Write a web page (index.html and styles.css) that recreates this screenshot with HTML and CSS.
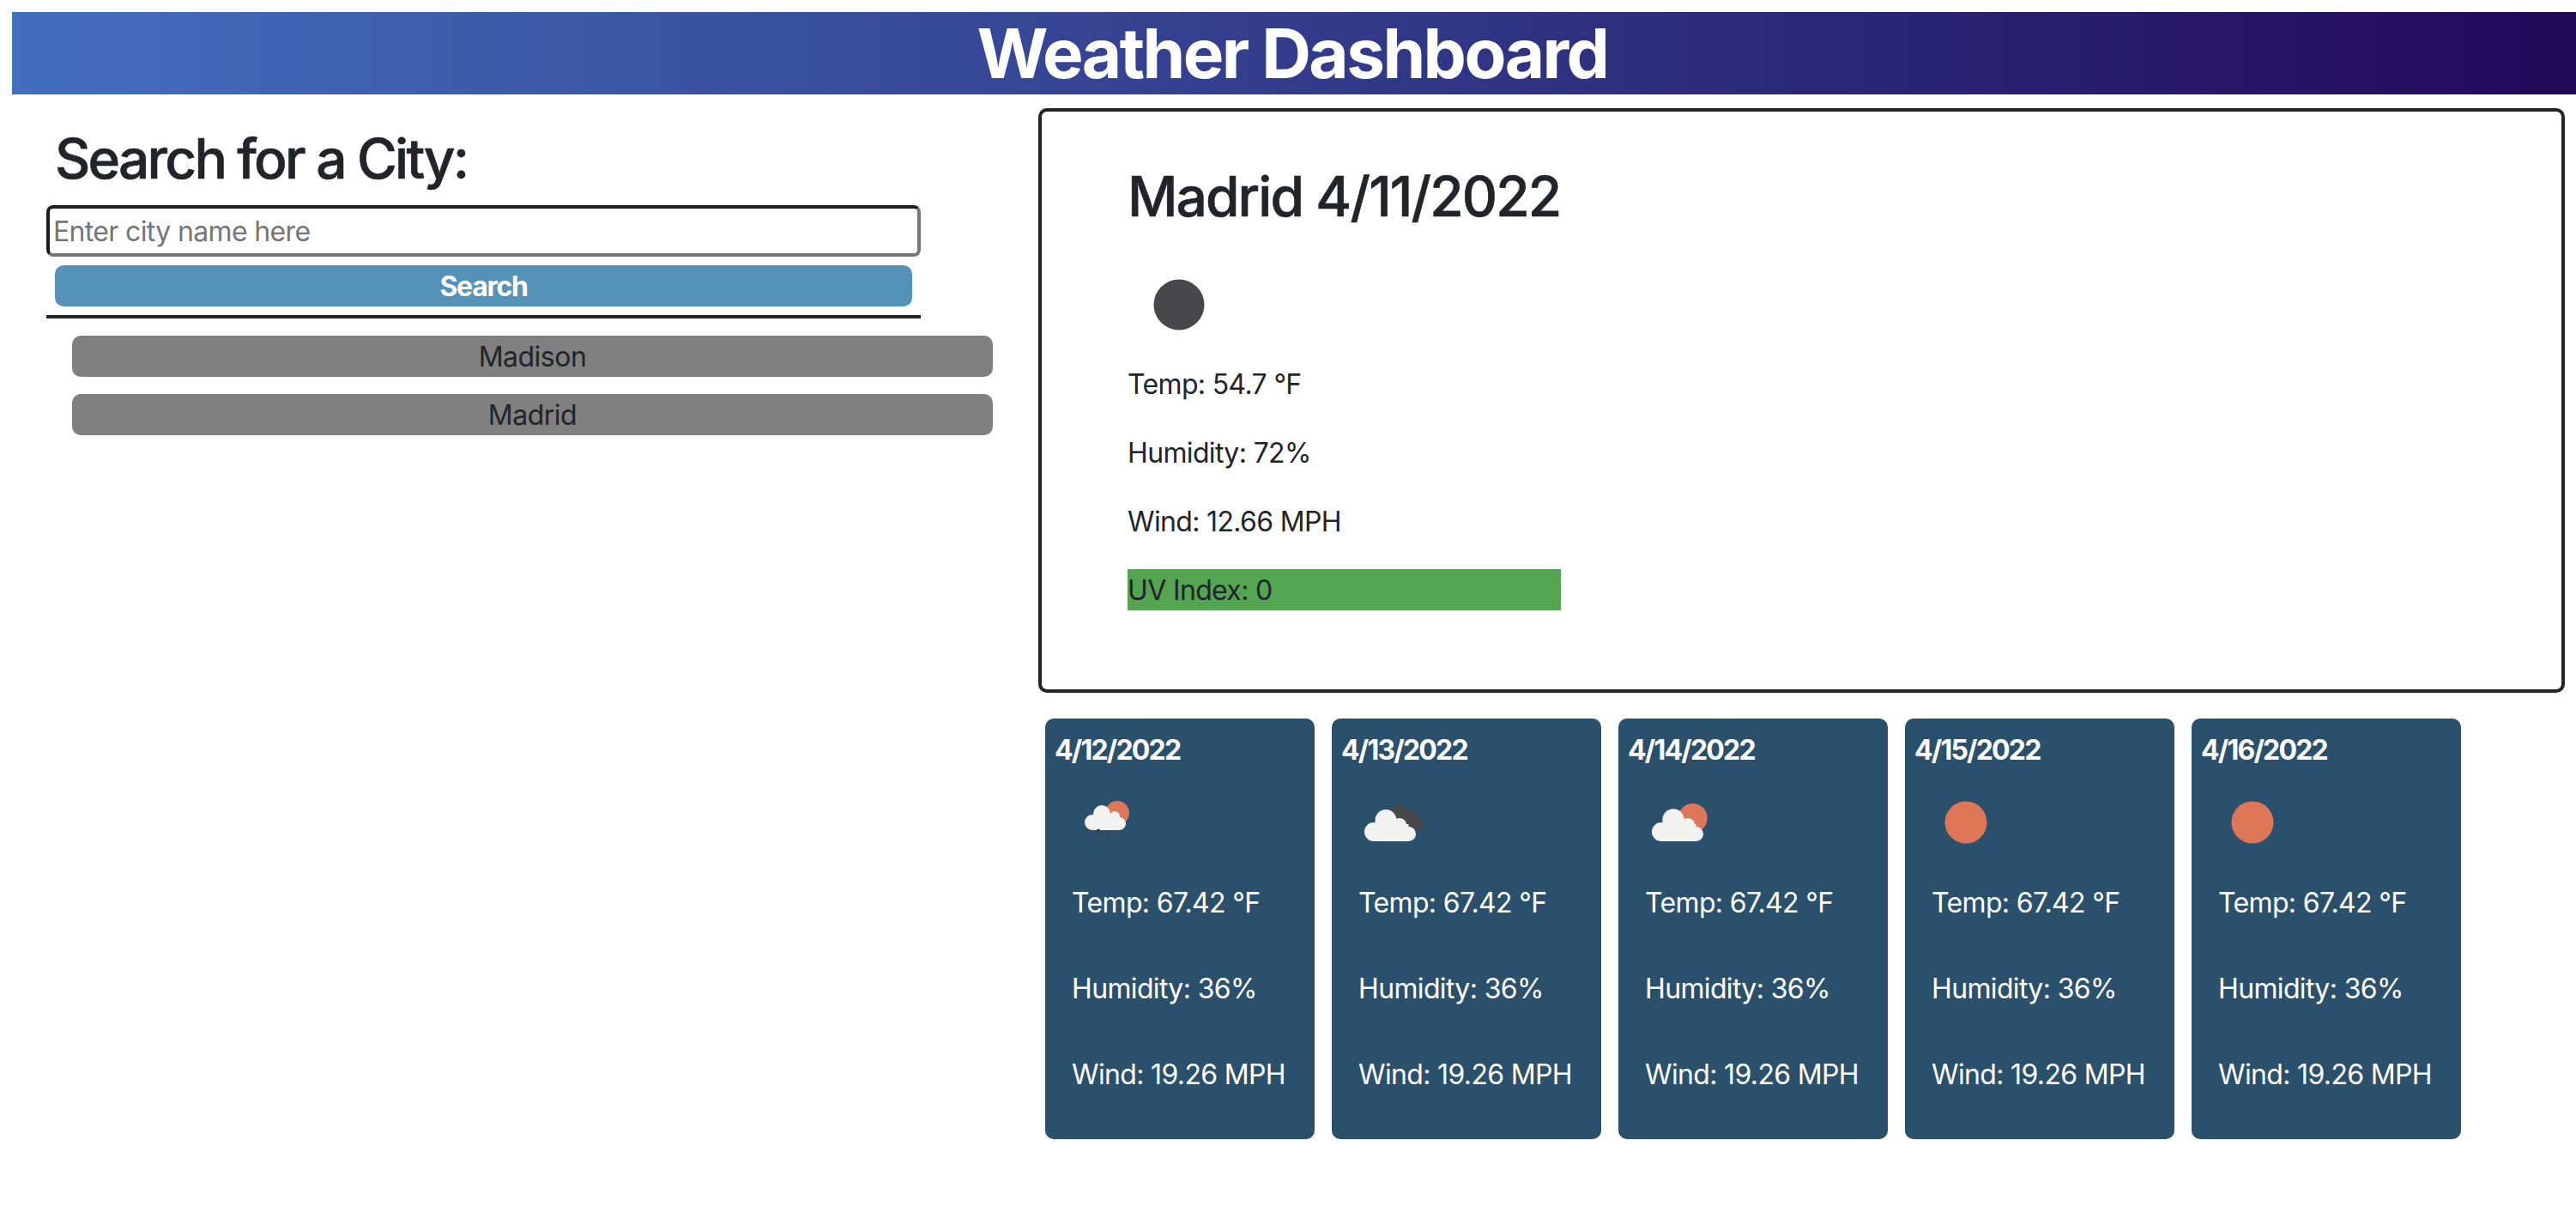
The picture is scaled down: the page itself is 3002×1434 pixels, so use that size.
FILE: index.html
```html
<!DOCTYPE html>
<html lang="en">
<head>
  <meta charset="UTF-8">
  <meta name="viewport" content="width=device-width, initial-scale=1.0">
  <title>Weather Dashboard</title>
  <link rel="stylesheet" href="styles.css">
</head>
<body>
  <header class="page-header">
    <h1>Weather Dashboard</h1>
  </header>

  <main class="layout">
    <section class="search-panel">
      <form class="search-form">
        <h2 class="search-title">Search for a City:</h2>
        <input class="search-input" type="text" placeholder="Enter city name here">
        <button class="search-btn" type="button">Search</button>
        <hr class="search-rule">
      </form>
      <div class="history">
        <button class="history-btn" type="button">Madison</button>
        <button class="history-btn" type="button">Madrid</button>
      </div>
    </section>

    <section class="weather-panel">
      <div class="current">
        <div class="current-details">
          <h2 class="current-title">Madrid 4/11/2022</h2>
          <svg class="current-icon" viewBox="0 0 120 120"><circle cx="60" cy="60" r="29.5" fill="#48484a"/></svg>
          <p>Temp: 54.7 °F</p>
          <p>Humidity: 72%</p>
          <p>Wind: 12.66 MPH</p>
          <p class="uv-low">UV Index: 0</p>
        </div>
      </div>

      <div class="forecast">
        <article class="day">
          <h5 class="day-date">4/12/2022</h5>
          <svg class="day-icon" viewBox="0 0 100 100">
            <circle cx="63" cy="39" r="14" fill="#dd7757"/>
            <g fill="#f2f2f1">
              <circle cx="45" cy="40" r="10"/>
              <circle cx="60" cy="43" r="6"/>
              <circle cx="34" cy="50" r="9"/>
              <circle cx="65.500" cy="51.500" r="7.500"/>
              <rect x="34" y="44" width="31.500" height="15"/>
            </g>
            <circle cx="41" cy="59" r="1.500" fill="#222"/>
            <g stroke="#4d4d50" stroke-width="2" stroke-linecap="round">
              <path d="M39 65.500l-1.500 3.500M48 64.500l-1.500 3.500M57 61.500l-1 2.500M45 71l-1 1.500M54 70.500l-1.500 2.500"/>
            </g>
          </svg>
          <p>Temp: 67.42 °F</p>
          <p>Humidity: 36%</p>
          <p>Wind: 19.26 MPH</p>
        </article>

        <article class="day">
          <h5 class="day-date">4/13/2022</h5>
          <svg class="day-icon" viewBox="0 0 100 100">
            <g fill="#48484a">
              <circle cx="57" cy="39" r="10"/>
              <circle cx="72" cy="44" r="8"/>
              <circle cx="80" cy="52" r="6.500"/>
              <path d="M50 40L74 38L80 58L66 62Z"/>
            </g>
            <g fill="#f2f2f1">
              <circle cx="42" cy="47.500" r="12.500"/>
              <circle cx="58" cy="53" r="8"/>
              <circle cx="28" cy="61" r="11"/>
              <circle cx="68.500" cy="63.500" r="8.500"/>
              <rect x="28" y="52" width="40.500" height="20"/>
            </g>
          </svg>
          <p>Temp: 67.42 °F</p>
          <p>Humidity: 36%</p>
          <p>Wind: 19.26 MPH</p>
        </article>

        <article class="day">
          <h5 class="day-date">4/14/2022</h5>
          <svg class="day-icon" viewBox="0 0 100 100">
            <circle cx="65.700" cy="45" r="17" fill="#dd7757"/>
            <g fill="#f2f2f1">
              <circle cx="43" cy="47" r="12.700"/>
              <circle cx="60" cy="53" r="8"/>
              <circle cx="29" cy="61" r="11"/>
              <circle cx="69.500" cy="63.500" r="8.500"/>
              <rect x="29" y="52" width="40.500" height="20"/>
            </g>
          </svg>
          <p>Temp: 67.42 °F</p>
          <p>Humidity: 36%</p>
          <p>Wind: 19.26 MPH</p>
        </article>

        <article class="day">
          <h5 class="day-date">4/15/2022</h5>
          <svg class="day-icon" viewBox="0 0 100 100"><circle cx="50" cy="50" r="24.500" fill="#dd7757"/></svg>
          <p>Temp: 67.42 °F</p>
          <p>Humidity: 36%</p>
          <p>Wind: 19.26 MPH</p>
        </article>

        <article class="day">
          <h5 class="day-date">4/16/2022</h5>
          <svg class="day-icon" viewBox="0 0 100 100"><circle cx="50" cy="50" r="24.500" fill="#dd7757"/></svg>
          <p>Temp: 67.42 °F</p>
          <p>Humidity: 36%</p>
          <p>Wind: 19.26 MPH</p>
        </article>
      </div>
    </section>
  </main>
</body>
</html>
```

FILE: styles.css
```css
* {
  box-sizing: border-box;
}

html,
body {
  overflow: hidden;
}

body {
  margin: 14px 0 0 14px;
  font-family: Inter, "Noto Sans", sans-serif;
  font-size: 32px;
  line-height: 48px;
  letter-spacing: -0.65px;
  color: #212529;
  background: #fff;
}

.page-header {
  height: 96px;
  background: linear-gradient(to right, #436fbd, #22095a);
  text-align: center;
}

.page-header h1 {
  margin: 0;
  font-size: 80px;
  line-height: 96px;
  font-weight: 700;
  letter-spacing: -2.6px;
  color: #fff;
  transform: translateX(-2px);
}

.layout {
  display: flex;
  align-items: flex-start;
}

/* left column */
.search-panel {
  width: 1196px;
  padding: 36px 0 0 40px;
}

.search-form {
  display: flex;
  flex-direction: column;
  width: 1019px;
}

.search-title {
  margin: 0 0 16px 10px;
  font-size: 64px;
  line-height: 77px;
  font-weight: 500;
  -webkit-text-stroke: 0.6px #212529;
  letter-spacing: -2.8px;
}

.search-input {
  height: 60px;
  padding: 0 4px;
  font-family: inherit;
  font-size: 32px;
  letter-spacing: -0.65px;
  border: 4px solid;
  border-color: #1e1e1e #767676 #767676 #1e1e1e;
  border-radius: 8px;
}

.search-input::placeholder {
  color: #757575;
}

.search-btn {
  height: 48px;
  margin: 10px 10px 0;
  padding: 0;
  font-family: inherit;
  font-size: 32px;
  font-weight: 700;
  letter-spacing: -1.3px;
  color: #fff;
  background: #5592ba;
  border: none;
  border-radius: 10px;
}

.search-rule {
  width: 100%;
  height: 4px;
  margin: 10px 0 20px;
  background: #212529;
  border: none;
}

.history {
  display: flex;
  flex-direction: column;
  gap: 20px;
  width: 1073px;
  margin-left: 30px;
}

.history-btn {
  height: 48px;
  padding: 0;
  font-family: inherit;
  font-size: 32px;
  letter-spacing: -0.5px;
  color: #212529;
  background: #808080;
  border: none;
  border-radius: 10px;
}

/* right column */
.weather-panel {
  width: 1779px;
  padding-top: 16px;
}

.current {
  height: 681px;
  padding: 60px 100px;
  border: 4px solid #212529;
  border-radius: 10px;
}

.current-details {
  width: 505px;
}

.current-title {
  margin: 0 0 28px;
  font-size: 64px;
  line-height: 77px;
  font-weight: 500;
  -webkit-text-stroke: 0.6px #212529;
  letter-spacing: -1.9px;
  white-space: nowrap;
}

.current-icon {
  display: block;
  width: 120px;
  height: 120px;
  margin-bottom: 8px;
}

.current p {
  height: 48px;
  margin: 0 0 32px;
  line-height: 50px;
}

.current .uv-low {
  margin: 0;
  background: #53a551;
}

.forecast {
  display: flex;
  gap: 20px;
  margin: 30px 0 0 8px;
}

.day {
  width: 314px;
  height: 490px;
  padding: 18px 11px 0;
  color: #fff;
  background: #2b506b;
  border-radius: 10px;
}

.day-date {
  margin: 0 0 15px;
  font-size: 32px;
  line-height: 38px;
  font-weight: 700;
  letter-spacing: -1.8px;
}

.day-icon {
  display: block;
  width: 100px;
  height: 100px;
  margin: 0 0 20px 10px;
}

.day p {
  margin: 0 0 52px 20px;
}
```
